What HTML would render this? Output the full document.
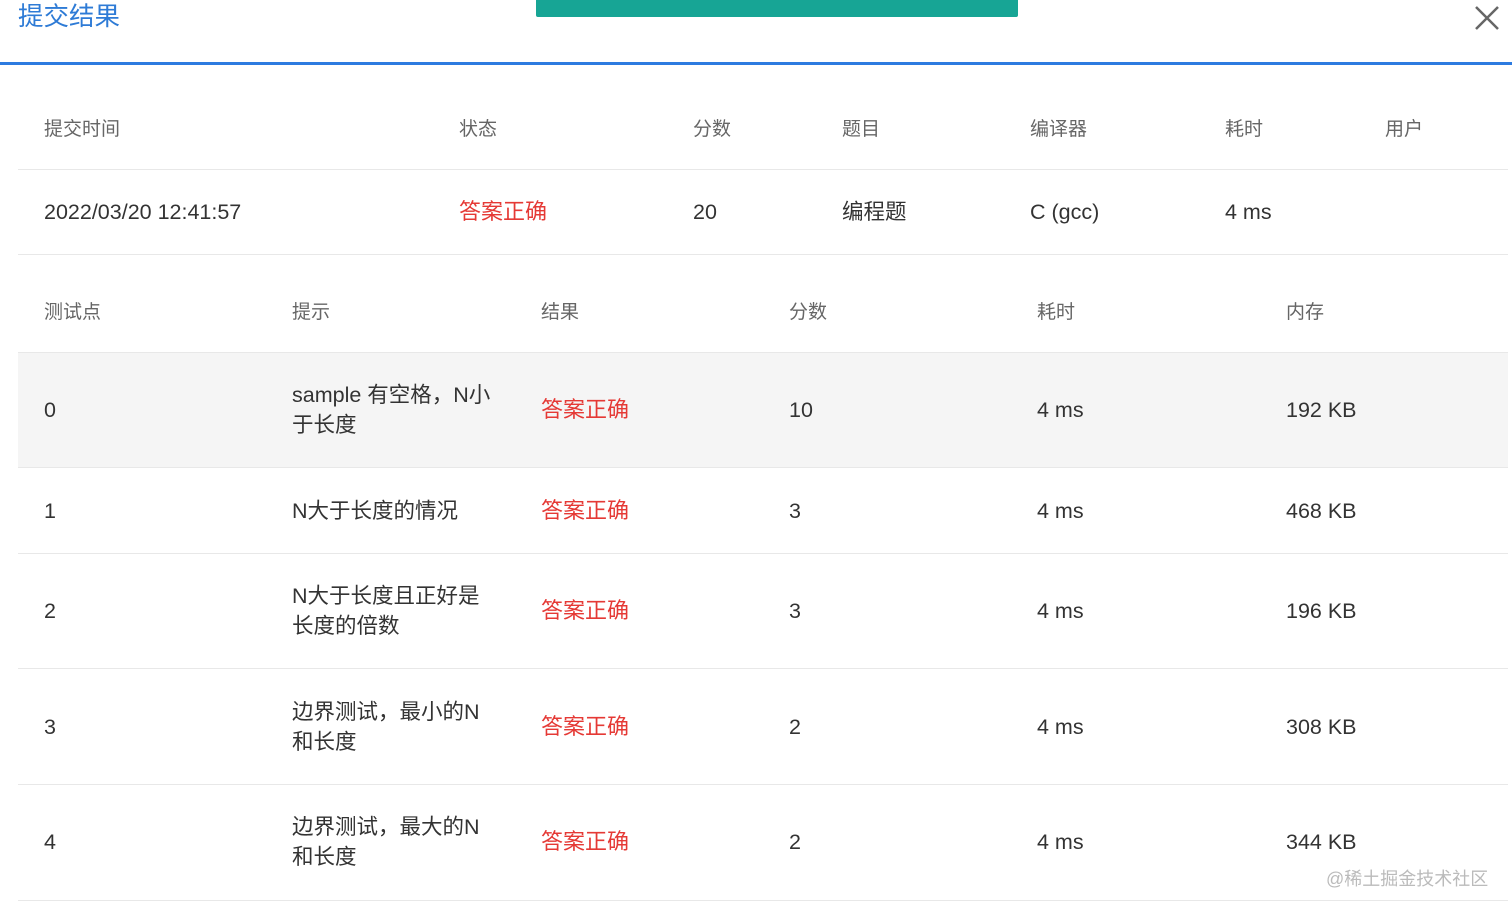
<!DOCTYPE html>
<html><head><meta charset="utf-8"><style>
body{margin:0;width:1512px;height:915px;background:#fff;position:relative;overflow:hidden;font-family:"Liberation Sans","Noto Sans CJK SC",sans-serif;}
.t{position:absolute;white-space:nowrap;font-size:21.5px;line-height:30px;transform:translateY(-50%);}
.h{color:#666;font-size:19px}
.d{color:#333}
.r{color:#e53935;font-size:22px}
.line{position:absolute;left:18px;right:4px;height:1px;background:#e8e8e8}
</style></head><body>
<div class="t" style="left:18px;top:17px;color:#2e7bd6;font-size:25.5px">提交结果</div>
<div style="position:absolute;left:536px;top:0;width:482px;height:17px;background:#17a595;border-radius:0 0 2px 2px"></div>
<svg style="position:absolute;left:1474px;top:5px" width="26" height="26"><path d="M2 2L24 24M24 2L2 24" stroke="#666" stroke-width="2.5"/></svg>
<div style="position:absolute;left:0;right:0;top:62px;height:3px;background:#2d7be0"></div>

<div class="t h" style="left:44px;top:130px">提交时间</div>
<div class="t h" style="left:459px;top:130px">状态</div>
<div class="t h" style="left:693px;top:130px">分数</div>
<div class="t h" style="left:842px;top:130px">题目</div>
<div class="t h" style="left:1030px;top:130px">编译器</div>
<div class="t h" style="left:1225px;top:130px">耗时</div>
<div class="t h" style="left:1385px;top:130px">用户</div>
<div class="line" style="top:169px"></div>
<div class="t d" style="left:44px;top:212px">2022/03/20 12:41:57</div>
<div class="t r" style="left:459px;top:212px">答案正确</div>
<div class="t d" style="left:693px;top:212px">20</div>
<div class="t d" style="left:842px;top:212px">编程题</div>
<div class="t d" style="left:1030px;top:212px">C (gcc)</div>
<div class="t d" style="left:1225px;top:212px">4 ms</div>
<div class="line" style="top:254px"></div>

<div class="t h" style="left:44px;top:313px">测试点</div>
<div class="t h" style="left:292px;top:313px">提示</div>
<div class="t h" style="left:541px;top:313px">结果</div>
<div class="t h" style="left:789px;top:313px">分数</div>
<div class="t h" style="left:1037px;top:313px">耗时</div>
<div class="t h" style="left:1286px;top:313px">内存</div>
<div class="line" style="top:352px"></div>
<div style="position:absolute;left:18px;right:4px;top:353px;height:114px;background:#f5f5f5"></div>
<div class="line" style="top:467px"></div>
<div class="line" style="top:553px"></div>
<div class="line" style="top:668px"></div>
<div class="line" style="top:784px"></div>
<div class="line" style="top:900px"></div>

<div class="t d" style="left:44px;top:410px">0</div>
<div class="t d" style="left:292px;top:410px">sample 有空格，N小<br>于长度</div>
<div class="t r" style="left:541px;top:410px">答案正确</div>
<div class="t d" style="left:789px;top:410px">10</div>
<div class="t d" style="left:1037px;top:410px">4 ms</div>
<div class="t d" style="left:1286px;top:410px">192 KB</div>

<div class="t d" style="left:44px;top:511px">1</div>
<div class="t d" style="left:292px;top:511px">N大于长度的情况</div>
<div class="t r" style="left:541px;top:511px">答案正确</div>
<div class="t d" style="left:789px;top:511px">3</div>
<div class="t d" style="left:1037px;top:511px">4 ms</div>
<div class="t d" style="left:1286px;top:511px">468 KB</div>

<div class="t d" style="left:44px;top:611px">2</div>
<div class="t d" style="left:292px;top:611px">N大于长度且正好是<br>长度的倍数</div>
<div class="t r" style="left:541px;top:611px">答案正确</div>
<div class="t d" style="left:789px;top:611px">3</div>
<div class="t d" style="left:1037px;top:611px">4 ms</div>
<div class="t d" style="left:1286px;top:611px">196 KB</div>

<div class="t d" style="left:44px;top:727px">3</div>
<div class="t d" style="left:292px;top:727px">边界测试，最小的N<br>和长度</div>
<div class="t r" style="left:541px;top:727px">答案正确</div>
<div class="t d" style="left:789px;top:727px">2</div>
<div class="t d" style="left:1037px;top:727px">4 ms</div>
<div class="t d" style="left:1286px;top:727px">308 KB</div>

<div class="t d" style="left:44px;top:842px">4</div>
<div class="t d" style="left:292px;top:842px">边界测试，最大的N<br>和长度</div>
<div class="t r" style="left:541px;top:842px">答案正确</div>
<div class="t d" style="left:789px;top:842px">2</div>
<div class="t d" style="left:1037px;top:842px">4 ms</div>
<div class="t d" style="left:1286px;top:842px">344 KB</div>

<div class="t" style="left:1326px;top:879px;font-size:18px;color:#bbb">@稀土掘金技术社区</div>
</body></html>
